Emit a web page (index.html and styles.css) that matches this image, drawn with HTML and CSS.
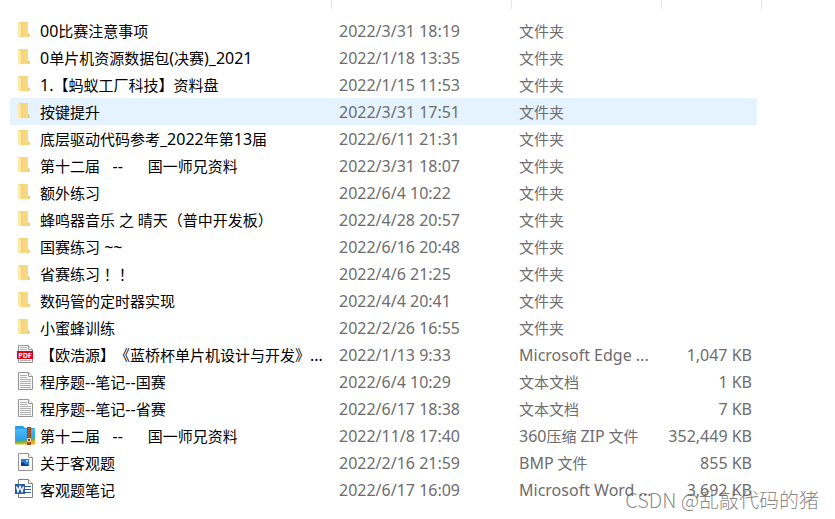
FILE: index.html
```html
<!DOCTYPE html>
<html lang="zh-CN">
<head>
<meta charset="utf-8">
<meta name="viewport" content="width=device-width, initial-scale=1">
<title>文件列表</title>
<link rel="stylesheet" href="styles.css">
</head>
<body>
<svg class="defs" aria-hidden="true">
  <defs>
    <linearGradient id="fold" x1="0" x2="1" y1="0" y2="0"><stop offset="0" stop-color="#f3d276"/><stop offset="1" stop-color="#fbdc86"/></linearGradient>
    <linearGradient id="zipblue" x1="0" x2="0" y1="0" y2="1"><stop offset="0" stop-color="#43bdf8"/><stop offset="1" stop-color="#2e96ea"/></linearGradient>
  </defs>
  <symbol id="folder" viewBox="0 0 20 20">
    <path fill="url(#fold)" d="M4 2h9v11.500h2v3.500H5z"/>
    <path fill="#eec465" d="M13 14h1v3h-1z"/>
    <path fill="#ffe7a6" d="M3 2l3 2v14L3 16z"/>
  </symbol>
  <symbol id="txt" viewBox="0 0 20 20">
    <path fill="#f8f8f8" stroke="#949494" d="M3.500 1.500h10l4 4v13h-14z"/>
    <path fill="#fff" stroke="#949494" d="M13.500 1.500v4h4"/>
    <path stroke="#b0b0b0" d="M5 4.500h7M5 6.500h7M5 8.500h11M5 10.500h11M5 12.500h11M5 14.500h11M5 16.500h11"/>
  </symbol>
  <symbol id="zip" viewBox="0 0 20 20">
    <path fill="#299be8" d="M0 2q0-1 1-1h7l2 2h9q1 0 1 1v12H0z"/>
    <path fill="url(#zipblue)" d="M0 4h20v13H0z"/>
    <path fill="#56bd3f" d="M0 15.500q12 1 20-3v4q-8 3-20 2z"/>
    <path fill="#f4a51c" d="M0 17.500q12 1 20-3v4q0 1-1 1H1q-1 0-1-1z"/>
    <path fill="#934b23" d="M12 2h4v18h-4z"/>
    <path stroke="#c98345" stroke-dasharray="1 1" d="M14 3v16"/>
    <path fill="#87401c" stroke="#f3d7a5" d="M12.500 13.500h3v3h-3z"/>
  </symbol>
  <symbol id="bmp" viewBox="0 0 20 20">
    <path fill="#f8f8f8" stroke="#949494" d="M3.500 1.500h10l4 4v13h-14z"/>
    <path fill="#fff" stroke="#949494" d="M13.500 1.500v4h4"/>
    <path fill="#2b7fd0" d="M6 7h8v7H6z"/>
    <path fill="#0c3e7d" d="M6 14v-3l2-1 3 3 1-1 2 2z"/>
    <path fill="#a9d3f5" d="M11 8h2v2h-2z"/>
  </symbol>
  <symbol id="word" viewBox="0 0 20 20">
    <path fill="#fff" stroke="#808080" d="M3.500 .5h10l4 4v14h-14z"/>
    <path fill="#fff" stroke="#808080" d="M13.500 .5v4h4"/>
    <path stroke="#2b5fae" d="M10 7.500h6M10 10.500h6M10 13.500h6"/>
    <path fill="#2458a8" d="M0 5h10v10H0z"/>
    <path fill="none" stroke="#fff" stroke-width="1.500" d="M1.500 7.500L3 12.500l2-5 2 5L8.500 7.500"/>
  </symbol>
</svg>
<main>
  <div class="ticks" aria-hidden="true"><span></span><span></span><span></span><span></span></div>
  <table class="files">
    <colgroup><col><col class="c-date"><col class="c-type"><col class="c-size"></colgroup>
    <tbody>
      <tr><td><svg class="icon"><use href="#folder"/></svg><b>00</b>比赛注意事项</td><td><b>2022/3/31 18:19</b></td><td>文件夹</td><td></td></tr>
      <tr><td><svg class="icon"><use href="#folder"/></svg><b>0</b>单片机资源数据包<b>(</b>决赛<b>)_2021</b></td><td><b>2022/1/18 13:35</b></td><td>文件夹</td><td></td></tr>
      <tr><td><svg class="icon"><use href="#folder"/></svg><b>1.</b>【蚂蚁工厂科技】资料盘</td><td><b>2022/1/15 11:53</b></td><td>文件夹</td><td></td></tr>
      <tr class="hover"><td><svg class="icon"><use href="#folder"/></svg>按键提升</td><td><b>2022/3/31 17:51</b></td><td>文件夹</td><td></td></tr>
      <tr><td><svg class="icon"><use href="#folder"/></svg>底层驱动代码参考<b>_2022</b>年第<b>13</b>届</td><td><b>2022/6/11 21:31</b></td><td>文件夹</td><td></td></tr>
      <tr><td><svg class="icon"><use href="#folder"/></svg>第十二届<b>   --      </b>国一师兄资料</td><td><b>2022/3/31 18:07</b></td><td>文件夹</td><td></td></tr>
      <tr><td><svg class="icon"><use href="#folder"/></svg>额外练习</td><td><b>2022/6/4 10:22</b></td><td>文件夹</td><td></td></tr>
      <tr><td><svg class="icon"><use href="#folder"/></svg>蜂鸣器音乐 之 晴天（普中开发板）</td><td><b>2022/4/28 20:57</b></td><td>文件夹</td><td></td></tr>
      <tr><td><svg class="icon"><use href="#folder"/></svg>国赛练习<b> ~~</b></td><td><b>2022/6/16 20:48</b></td><td>文件夹</td><td></td></tr>
      <tr><td><svg class="icon"><use href="#folder"/></svg>省赛练习<span lang="zh-TW" class="centered">！！</span></td><td><b>2022/4/6 21:25</b></td><td>文件夹</td><td></td></tr>
      <tr><td><svg class="icon"><use href="#folder"/></svg>数码管的定时器实现</td><td><b>2022/4/4 20:41</b></td><td>文件夹</td><td></td></tr>
      <tr><td><svg class="icon"><use href="#folder"/></svg>小蜜蜂训练</td><td><b>2022/2/26 16:55</b></td><td>文件夹</td><td></td></tr>
      <tr><td><svg class="icon" viewBox="0 0 20 20"><path fill="#f6f6f6" stroke="#949494" d="M3.500 1.500h10l4 4v13h-14z"/><path fill="#fff" stroke="#949494" d="M13.500 1.500v4h4"/><path stroke="#b5b5b5" d="M5 3.500h7M5 5.500h7M5 16.500h11"/><path fill="#d9051a" d="M2 7h16v8H2z"/><text x="10" y="13.500" text-anchor="middle" class="pdf-label">PDF</text></svg>【欧浩源】《蓝桥杯单片机设计与开发》<b>...</b></td><td><b>2022/1/13 9:33</b></td><td><b>Microsoft Edge ...</b></td><td><b>1,047 KB</b></td></tr>
      <tr><td><svg class="icon"><use href="#txt"/></svg>程序题<b>--</b>笔记<b>--</b>国赛</td><td><b>2022/6/4 10:29</b></td><td>文本文档</td><td><b>1 KB</b></td></tr>
      <tr><td><svg class="icon"><use href="#txt"/></svg>程序题<b>--</b>笔记<b>--</b>省赛</td><td><b>2022/6/17 18:38</b></td><td>文本文档</td><td><b>7 KB</b></td></tr>
      <tr><td><svg class="icon"><use href="#zip"/></svg>第十二届<b>   --      </b>国一师兄资料</td><td><b>2022/11/8 17:40</b></td><td><b>360</b>压缩 <b>ZIP</b> 文件</td><td><b>352,449 KB</b></td></tr>
      <tr><td><svg class="icon"><use href="#bmp"/></svg>关于客观题</td><td><b>2022/2/16 21:59</b></td><td><b>BMP</b> 文件</td><td><b>855 KB</b></td></tr>
      <tr><td><svg class="icon"><use href="#word"/></svg>客观题笔记</td><td><b>2022/6/17 16:09</b></td><td><b>Microsoft Word ...</b></td><td><b>3,692 KB</b></td></tr>
    </tbody>
  </table>
</main>
<div class="watermark">CSDN @乱敲代码的猪</div>
</body>
</html>
```
FILE: styles.css
```css
* {
  box-sizing: border-box;
}

body {
  position: relative;
  margin: 0;
  min-height: 100vh;
  background: #fff;
  color: #000;
  font-family: "Noto Sans", "Noto Sans CJK SC", sans-serif;
  font-size: 15px;
  line-height: 24px;
  text-spacing-trim: space-all;
}

.defs {
  position: absolute;
  width: 0;
  height: 0;
}

main {
  padding: 0 78px 0 10px;
}

.ticks {
  display: grid;
  grid-template-columns: 1fr 180px 150px 100px;
  height: 9px;
  margin: 0 -5px 8px 0;
}

.ticks span {
  border-right: 1px solid #e5e5e5;
}

.files {
  width: 100%;
  table-layout: fixed;
  border-collapse: collapse;
}

.c-date {
  width: 180px;
}

.c-type {
  width: 150px;
}

.c-size {
  width: 96px;
}

td {
  height: 27px;
  padding: 0 0 0 8px;
  color: #6d6d6d;
  white-space: pre;
  overflow: hidden;
}

td:first-child {
  padding-left: 5px;
  color: #000;
}

td:last-child {
  padding: 0 5px 0 0;
  text-align: right;
}

/* Latin runs sit one size above the Chinese text */
td b {
  font-size: 16px;
  font-weight: 400;
  line-height: 20px;
}

.hover td {
  background: #e5f3ff;
}

.icon {
  width: 20px;
  height: 20px;
  margin: -2px 5px 2px 0;
  vertical-align: middle;
}

.pdf-label {
  fill: #fff;
  font: 700 7px "Open Sans", sans-serif;
}

.centered {
  font-family: "Noto Sans CJK TC", sans-serif;
  line-height: 20px;
}

.watermark {
  position: absolute;
  right: 16px;
  bottom: 4px;
  color: rgba(95, 95, 95, 0.75);
  font-family: "Noto Sans CJK SC", sans-serif;
  font-size: 20px;
  font-weight: 300;
  line-height: 30px;
}
```
